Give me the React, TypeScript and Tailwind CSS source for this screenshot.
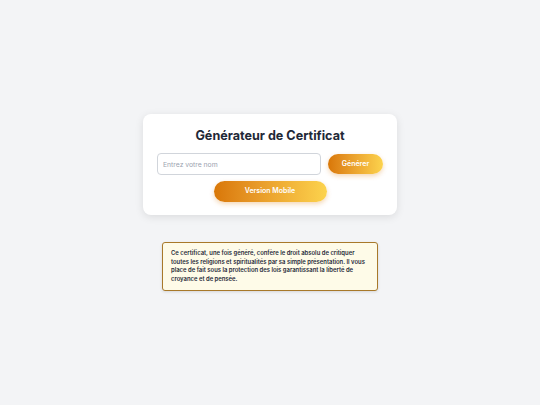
export default function App() {
  return (
    <div
      className="min-h-[405px] w-full bg-[#f3f4f6] pt-[114px] flex flex-col items-center"
      style={{ fontFamily: "Inter, 'Noto Sans', sans-serif" }}
    >
      <div className="w-[254px] bg-white rounded-[8px] shadow-[0_2px_8px_rgba(0,0,0,0.1)] px-[14px] pt-[12px] pb-[13px] flex flex-col">
        <h1 className="text-center text-[12.6px] leading-[20px] font-bold text-[#1f2937] mb-[7px]">
          Générateur de Certificat
        </h1>
        <div className="flex items-center gap-[7px]">
          <input
            type="text"
            placeholder="Entrez votre nom"
            className="flex-1 min-w-0 h-[22px] border border-[#d1d5db] rounded-[4px] px-[5px] text-[6.8px] text-[#374151] placeholder:text-[#9ca3af] outline-none"
          />
          <button className="w-[55px] h-[20px] rounded-full bg-gradient-to-r from-[#d97706] to-[#fcd34d] text-white text-[7px] font-semibold shadow-[0_2px_5px_rgba(217,119,6,0.3)]">
            Générer
          </button>
        </div>
        <div className="flex justify-center mt-[6px]">
          <button className="w-[113px] h-[21px] rounded-full bg-gradient-to-r from-[#d97706] to-[#fcd34d] text-white text-[7px] font-semibold shadow-[0_2px_5px_rgba(217,119,6,0.3)]">
            Version Mobile
          </button>
        </div>
      </div>

      <div className="mt-[27px] w-[216px] bg-[#fefbe8] border border-[#a8792a] rounded-[3px] px-[8px] py-[6px] shadow-[0_1px_3px_rgba(0,0,0,0.12)]">
        <p className="text-[5.9px] leading-[8.7px] font-semibold text-[#1f2937]">
          Ce certificat, une fois généré, confère le droit absolu de critiquer toutes les religions et spiritualités par sa simple présentation. Il vous place de fait sous la protection des lois garantissant la liberté de croyance et de pensée.
        </p>
      </div>
    </div>
  );
}
